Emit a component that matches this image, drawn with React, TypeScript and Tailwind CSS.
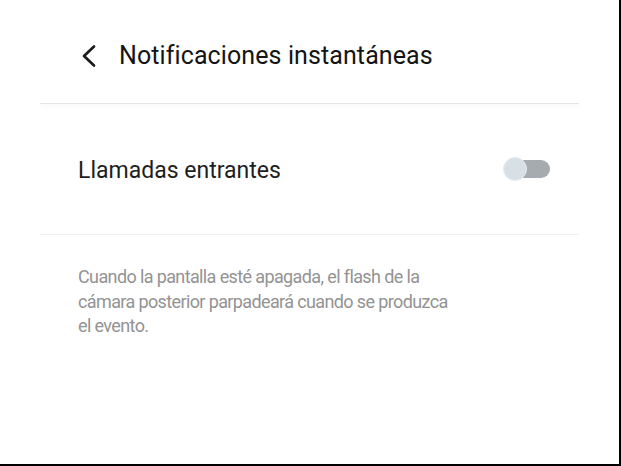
import React from 'react';

const font = { fontFamily: 'Roboto, "Noto Sans", sans-serif' };

const BackIcon: React.FC = () => (
  <svg width="18" height="24" viewBox="0 0 18 24" fill="none">
    <path d="M14 2.5 L4 12 L14 21.5" stroke="#1c1c1c" strokeWidth="2.7" strokeLinecap="round" strokeLinejoin="round" />
  </svg>
);

const Toggle: React.FC = () => (
  <div className="relative w-[47px] h-[24px]">
    <div className="absolute right-0 top-[3px] h-[18px] w-[40px] rounded-full bg-[#a6abaf]" />
    <div className="absolute left-0 top-0 h-[24px] w-[24px] rounded-full bg-[#d8e0e7] border border-[#e6ebf0]" />
  </div>
);

const App: React.FC = () => {
  return (
    <div
      className="w-[621px] h-[466px] box-border bg-white border-r-2 border-b-2 border-black overflow-hidden"
      style={font}
    >
      {/* Header */}
      <div className="h-[103px] pt-[8px] box-border flex items-center pl-[80px] gap-[21px]">
        <BackIcon />
        <h1 className="text-[25px] leading-[29px] text-[#141414] font-normal tracking-[0.1px]">
          Notificaciones instantáneas
        </h1>
      </div>

      <div className="mx-[40px]">
        <div className="h-px bg-[#e4e4e4] shadow-[0_2px_4px_rgba(0,0,0,0.1)]" />

        {/* Row */}
        <div className="h-[130px] flex items-center justify-between pl-[38px] pr-[29px]">
          <span className="text-[23px] leading-[27px] text-[#1e1e1e] pt-[2px]">Llamadas entrantes</span>
          <Toggle />
        </div>

        <div className="h-px bg-[#f1f1f1]" />

        {/* Description */}
        <p className="pt-[30px] pl-[38px] w-[412px] text-[18px] leading-[24.5px] tracking-[-0.62px] text-[#939393]">
          Cuando la pantalla esté apagada, el flash de la cámara posterior parpadeará cuando se produzca el evento.
        </p>
      </div>
    </div>
  );
};

export default App;
